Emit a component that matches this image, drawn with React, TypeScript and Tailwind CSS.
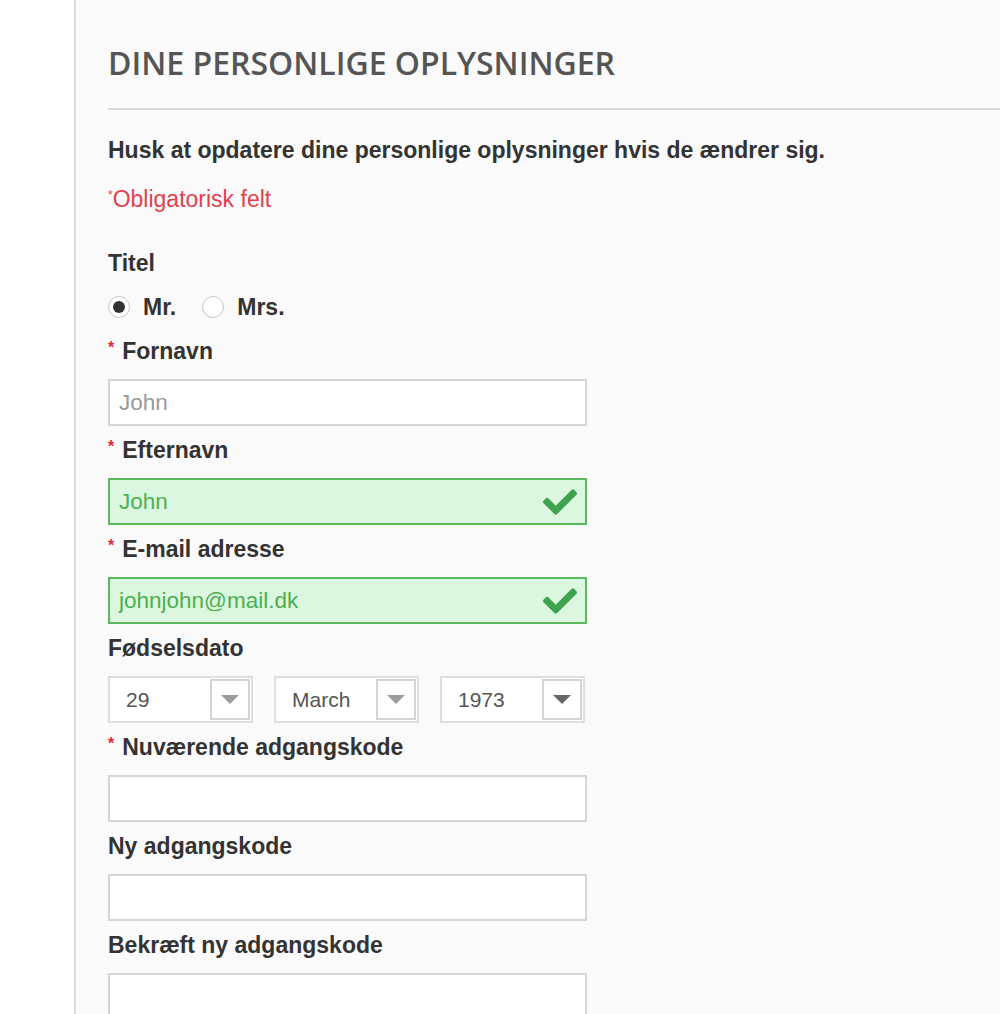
import React from 'react';
import { FaCheck } from 'react-icons/fa';

const Req = () => <span className="text-[#e8262f] text-[16px] mr-[8px] relative -top-[3px]">*</span>;

const Label: React.FC<{ text: string; required?: boolean }> = ({ text, required }) => (
  <div className="mt-[12px] mb-[16px] h-[24px] flex items-center text-[23px] font-bold text-[#333]">
    {required && <Req />}
    {text}
  </div>
);

const TextInput: React.FC<{ value?: string; placeholder?: string; valid?: boolean }> = ({ value, placeholder, valid }) => (
  <div
    className={
      valid
        ? 'w-[479px] h-[47px] border-2 border-[#5cb85c] bg-[#dcf7df] flex items-center justify-between pl-[9px] pr-[8px]'
        : 'w-[479px] h-[47px] border-2 border-[#d6d6d6] bg-white flex items-center pl-[9px]'
    }
  >
    {value && <span className="text-[22.5px] text-[#4caf50]">{value}</span>}
    {placeholder && <span className="text-[22.5px] text-[#9a9a9a]">{placeholder}</span>}
    {valid && <FaCheck className="w-[34px] h-[34px] text-[#3fa34d]" />}
  </div>
);

const Select: React.FC<{ value: string; dark?: boolean }> = ({ value, dark }) => (
  <div className="w-[145px] h-[47px] border-2 border-[#dedede] bg-white flex items-center justify-between pl-[16px] pr-[1px]">
    <span className="text-[21px] text-[#555]">{value}</span>
    <div className="w-[40px] h-[41px] border-2 border-[#d4d4d4] bg-white flex items-center justify-center">
      <div className={dark ? 'w-0 h-0 border-l-[9px] border-r-[9px] border-t-[9px] border-l-transparent border-r-transparent border-t-[#666]' : 'w-0 h-0 border-l-[9px] border-r-[9px] border-t-[9px] border-l-transparent border-r-transparent border-t-[#9c9c9c]'} />
    </div>
  </div>
);

const Radio: React.FC<{ checked?: boolean; label: string }> = ({ checked, label }) => (
  <div className="flex items-center">
    <div className="w-[22px] h-[22px] rounded-full border border-[#c8c8c8] bg-white flex items-center justify-center">
      {checked && <div className="w-[12px] h-[12px] rounded-full bg-[#333]" />}
    </div>
    <span className="ml-[13px] text-[23px] font-bold text-[#333]">{label}</span>
  </div>
);

export default function App() {
  return (
    <div className="w-[1000px] h-[1014px] overflow-hidden flex bg-white" style={{ fontFamily: '"Liberation Sans", Arial, sans-serif' }}>
      <div className="w-[74px] shrink-0 bg-white" />
      <div className="flex-1 bg-[#fafafa] border-l-2 border-[#dcdcdc] pl-[32px]">
        <h1 className="pt-[39px] h-[108px] text-[32px] font-semibold text-[#555]" style={{ fontFamily: '"Open Sans", sans-serif' }}>
          DINE PERSONLIGE OPLYSNINGER
        </h1>
        <div className="h-[2px] bg-[#d9d9d9]" />
        <p className="mt-[28px] text-[23px] font-bold text-[#333] leading-[24px]">
          Husk at opdatere dine personlige oplysninger hvis de ændrer sig.
        </p>
        <p className="mt-[25px] text-[23px] text-[#e0424f] leading-[24px]">
          <span className="text-[12px] relative -top-[8px]">*</span>Obligatorisk felt
        </p>
        <div className="mt-[36px] h-[24px] flex items-center text-[23px] font-bold text-[#333]">Titel</div>
        <div className="mt-[20px] h-[24px] flex items-center gap-[26px]">
          <Radio checked label="Mr." />
          <Radio label="Mrs." />
        </div>
        <div className="mt-[20px]">
          <Label text="Fornavn" required />
          <TextInput placeholder="John" />
          <Label text="Efternavn" required />
          <TextInput value="John" valid />
          <Label text="E-mail adresse" required />
          <TextInput value="johnjohn@mail.dk" valid />
          <Label text="Fødselsdato" />
          <div className="flex gap-[21px]">
            <Select value="29" />
            <Select value="March" />
            <Select value="1973" dark />
          </div>
          <Label text="Nuværende adgangskode" required />
          <TextInput />
          <Label text="Ny adgangskode" />
          <TextInput />
          <Label text="Bekræft ny adgangskode" />
          <TextInput />
        </div>
      </div>
    </div>
  );
}
